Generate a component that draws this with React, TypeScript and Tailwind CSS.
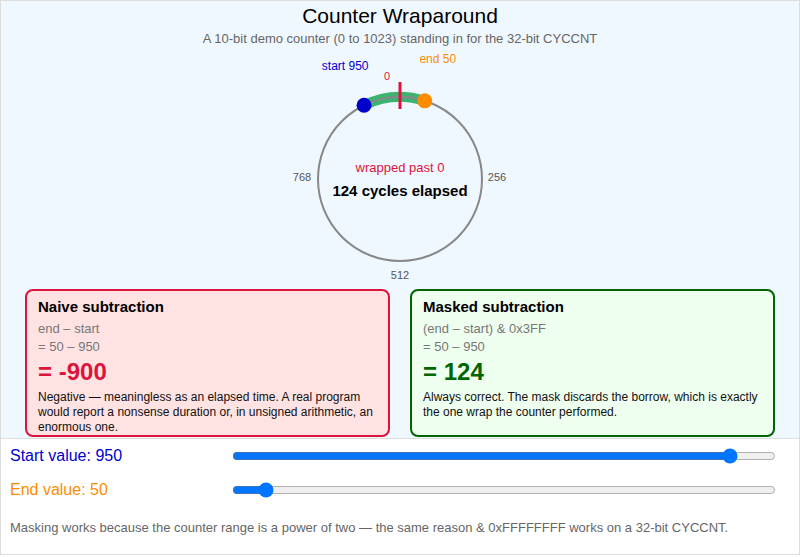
import React from "react";

const START = 950;
const END = 50;
const CX = 130;
const CY = 129;
const R = 82;

function pt(v: number, r: number) {
  const a = (v / 1024) * Math.PI * 2;
  return { x: CX + r * Math.sin(a), y: CY - r * Math.cos(a) };
}

function Dial() {
  const s = pt(START, R);
  const e = pt(END, R);
  const span = (END - START + 1024) % 1024;
  const large = span > 512 ? 1 : 0;
  const sl = pt(START, 125);
  const el = pt(END, 125);
  return (
    <svg width="260" height="236" viewBox="0 0 260 236" className="block mx-auto mt-[3px]">
      <circle cx={CX} cy={CY} r={R} fill="none" stroke="#888888" strokeWidth="2" />
      <path
        d={`M ${s.x} ${s.y} A ${R} ${R} 0 ${large} 1 ${e.x} ${e.y}`}
        fill="none"
        stroke="#3cb371"
        strokeWidth="10"
      />
      <path
        d={`M ${s.x} ${s.y} A ${R} ${R} 0 ${large} 1 ${e.x} ${e.y}`}
        fill="none"
        stroke="#888888"
        strokeWidth="2"
      />
      <line x1={CX} y1={32} x2={CX} y2={59} stroke="#dc143c" strokeWidth="3" />
      <text x={CX - 13} y={27} fontSize="11" fill="#dc143c" textAnchor="middle" dominantBaseline="middle">0</text>
      <text x={CX - 98} y={128} fontSize="11" fill="#555555" textAnchor="middle" dominantBaseline="middle">768</text>
      <text x={CX + 97} y={128} fontSize="11" fill="#555555" textAnchor="middle" dominantBaseline="middle">256</text>
      <text x={CX} y={226} fontSize="11" fill="#555555" textAnchor="middle" dominantBaseline="middle">512</text>
      <circle cx={s.x} cy={s.y} r="7.5" fill="#0000cd" />
      <circle cx={e.x} cy={e.y} r="7.5" fill="#ff8c00" />
      <text x={sl.x} y={sl.y} fontSize="12" fill="#0000cd" textAnchor="middle" dominantBaseline="middle">start {START}</text>
      <text x={el.x} y={el.y} fontSize="12" fill="#ff8c00" textAnchor="middle" dominantBaseline="middle">end {END}</text>
      <text x={CX} y={119} fontSize="13" fill="#dc143c" textAnchor="middle" dominantBaseline="middle">wrapped past 0</text>
      <text x={CX} y={142} fontSize="15" fontWeight="bold" fill="#000000" textAnchor="middle" dominantBaseline="middle">{span} cycles elapsed</text>
    </svg>
  );
}

export default function App() {
  const span = (END - START + 1024) % 1024;
  return (
    <div className="font-['Liberation_Sans',Arial,sans-serif] w-[800px] h-[555px] box-border border border-[#dddddd] bg-white text-black">
      <div className="bg-[#f0f8ff] border-b border-[#dddddd] pt-[3px] pb-[1px]">
        <div className="text-center text-[21px] leading-[24px]">Counter Wraparound</div>
        <div className="text-center text-[13px] leading-[16px] text-[#666666] mt-[3px]">
          A 10-bit demo counter (0 to 1023) standing in for the 32-bit CYCCNT
        </div>
        <Dial />
        <div className="grid grid-cols-2 gap-[20px] px-[24px] mt-[3px]">
          <div className="h-[148px] overflow-hidden rounded-[8px] border-2 border-[#dc143c] bg-[#ffe2e2] px-[11px] pt-[6px]">
            <div className="text-[15px] leading-[20px] font-bold">Naive subtraction</div>
            <div className="text-[13px] leading-[18px] text-[#777777] mt-[3px]">end – start</div>
            <div className="text-[13px] leading-[18px] text-[#777777]">= {END} – {START}</div>
            <div className="text-[24px] leading-[28px] font-bold text-[#dc143c] mt-[2px]">= {END - START}</div>
            <div className="text-[12px] leading-[15px] mt-[4px] text-[#111111]">
              Negative — meaningless as an elapsed time. A real program would report a nonsense duration or, in unsigned arithmetic, an enormous one.
            </div>
          </div>
          <div className="h-[148px] overflow-hidden rounded-[8px] border-2 border-[#006400] bg-[#efffef] px-[11px] pt-[6px]">
            <div className="text-[15px] leading-[20px] font-bold">Masked subtraction</div>
            <div className="text-[13px] leading-[18px] text-[#777777] mt-[3px]">(end – start) &amp; 0x3FF</div>
            <div className="text-[13px] leading-[18px] text-[#777777]">= {END} – {START}</div>
            <div className="text-[24px] leading-[28px] font-bold text-[#006400] mt-[2px]">= {span}</div>
            <div className="text-[12px] leading-[15px] mt-[4px] text-[#111111]">
              Always correct. The mask discards the borrow, which is exactly the one wrap the counter performed.
            </div>
          </div>
        </div>
      </div>
      <div className="px-[9px] pt-[2px]">
        <div className="flex items-center h-[30px]">
          <div className="w-[222px] text-[16px] text-[#0000cd]">Start value: {START}</div>
          <input type="range" min={0} max={1023} defaultValue={START} className="m-0 w-[544px]" />
        </div>
        <div className="flex items-center h-[30px] mt-[4px]">
          <div className="w-[222px] text-[16px] text-[#ff8c00]">End value: {END}</div>
          <input type="range" min={0} max={1023} defaultValue={END} className="m-0 w-[544px]" />
        </div>
        <div className="text-[13px] leading-[16px] text-[#666666] mt-[15px]">
          Masking works because the counter range is a power of two — the same reason &amp; 0xFFFFFFFF works on a 32-bit CYCCNT.
        </div>
      </div>
    </div>
  );
}
